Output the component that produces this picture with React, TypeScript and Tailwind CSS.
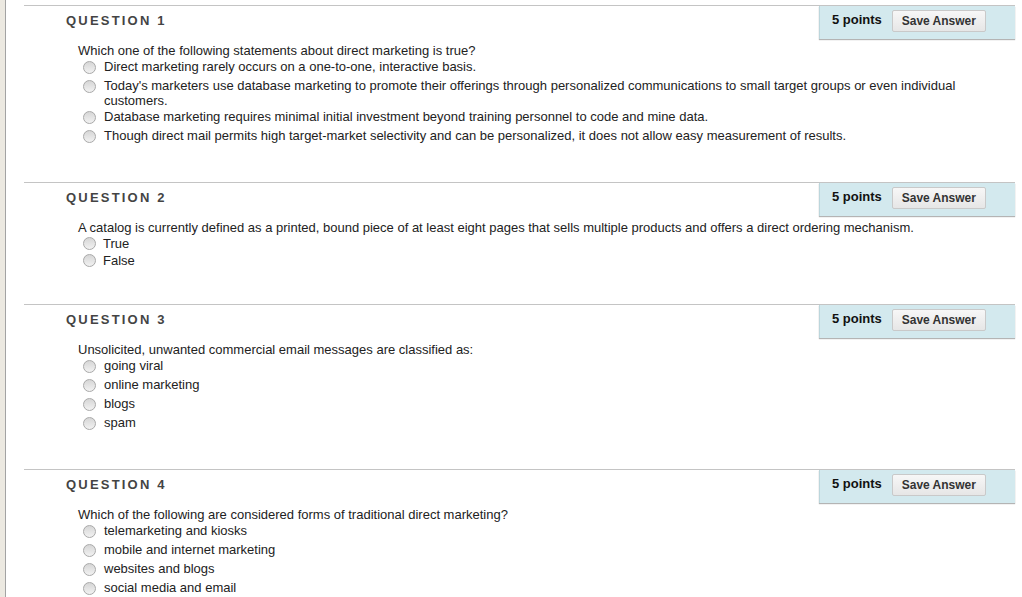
import React from "react";

type Question = {
  num: number;
  text: string;
  options: string[];
  tight?: boolean;
};

const questions: Question[] = [
  {
    num: 1,
    text: "Which one of the following statements about direct marketing is true?",
    options: [
      "Direct marketing rarely occurs on a one-to-one, interactive basis.",
      "Today's marketers use database marketing to promote their offerings through personalized communications to small target groups or even individual customers.",
      "Database marketing requires minimal initial investment beyond training personnel to code and mine data.",
      "Though direct mail permits high target-market selectivity and can be personalized, it does not allow easy measurement of results.",
    ],
  },
  {
    num: 2,
    text: "A catalog is currently defined as a printed, bound piece of at least eight pages that sells multiple products and offers a direct ordering mechanism.",
    options: ["True", "False"],
    tight: true,
  },
  {
    num: 3,
    text: "Unsolicited, unwanted commercial email messages are classified as:",
    options: ["going viral", "online marketing", "blogs", "spam"],
  },
  {
    num: 4,
    text: "Which of the following are considered forms of traditional direct marketing?",
    options: [
      "telemarketing and kiosks",
      "mobile and internet marketing",
      "websites and blogs",
      "social media and email",
    ],
  },
];

function Radio({ tight }: { tight?: boolean }) {
  return (
    <span
      className={
        tight
          ? "my-[2px] h-[13px] w-[13px] shrink-0 rounded-full border border-[#a9a9a9] bg-gradient-to-b from-[#d6d6d6] to-[#f2f2f2]"
          : "my-[3px] h-[13px] w-[13px] shrink-0 rounded-full border border-[#a9a9a9] bg-gradient-to-b from-[#d6d6d6] to-[#f2f2f2]"
      }
    />
  );
}

function QuestionBlock({ q }: { q: Question }) {
  return (
    <div className={q.tight ? "border-t border-[#c4c4c4] pb-[35px]" : "border-t border-[#c4c4c4] pb-[36px]"}>
      <div className="flex h-[33px] justify-between">
        <h2 className="pl-[42px] pt-[7px] text-[13px] font-bold leading-[16px] tracking-[2.2px] text-[#444]">
          QUESTION {q.num}
        </h2>
        <div className="flex w-[196px] items-start border-l border-[#bcd6dc] bg-[#d3e9ee] shadow-[0_1px_1px_#b4b4b4]">
          <span className="pl-[12px] pt-[6px] text-[13px] font-bold leading-[16px] text-[#111]">5 points</span>
          <button className="ml-[10px] mt-[4px] h-[22px] w-[94px] rounded-[2px] border border-[#c9c9c9] bg-gradient-to-b from-[#f7f7f7] to-[#e6e6e6] text-[12px] font-bold text-[#333]">
            Save Answer
          </button>
        </div>
      </div>
      <div className="pl-[54px] pr-[31px] pt-[4px] text-[13px] text-[#222]">
        <p className="leading-[15px]">{q.text}</p>
        <ul>
          {q.options.map((o) => (
            <li key={o} className={q.tight ? "flex gap-[7px] pl-[5px]" : "flex gap-[8px] pl-[5px]"}>
              <Radio tight={q.tight} />
              <span className="pt-[1px] leading-[15px]">{o}</span>
            </li>
          ))}
        </ul>
      </div>
    </div>
  );
}

export default function App() {
  return (
    <div className="flex h-[597px] overflow-hidden bg-white font-['Liberation_Sans',Arial,sans-serif]">
      <div className="w-[6px] shrink-0 border-r border-[#a3a3a3] bg-[#ece9e1]" />
      <main className="ml-[18px] mr-[7px] flex-1 pt-[5px]">
        {questions.map((q) => (
          <QuestionBlock key={q.num} q={q} />
        ))}
      </main>
    </div>
  );
}
